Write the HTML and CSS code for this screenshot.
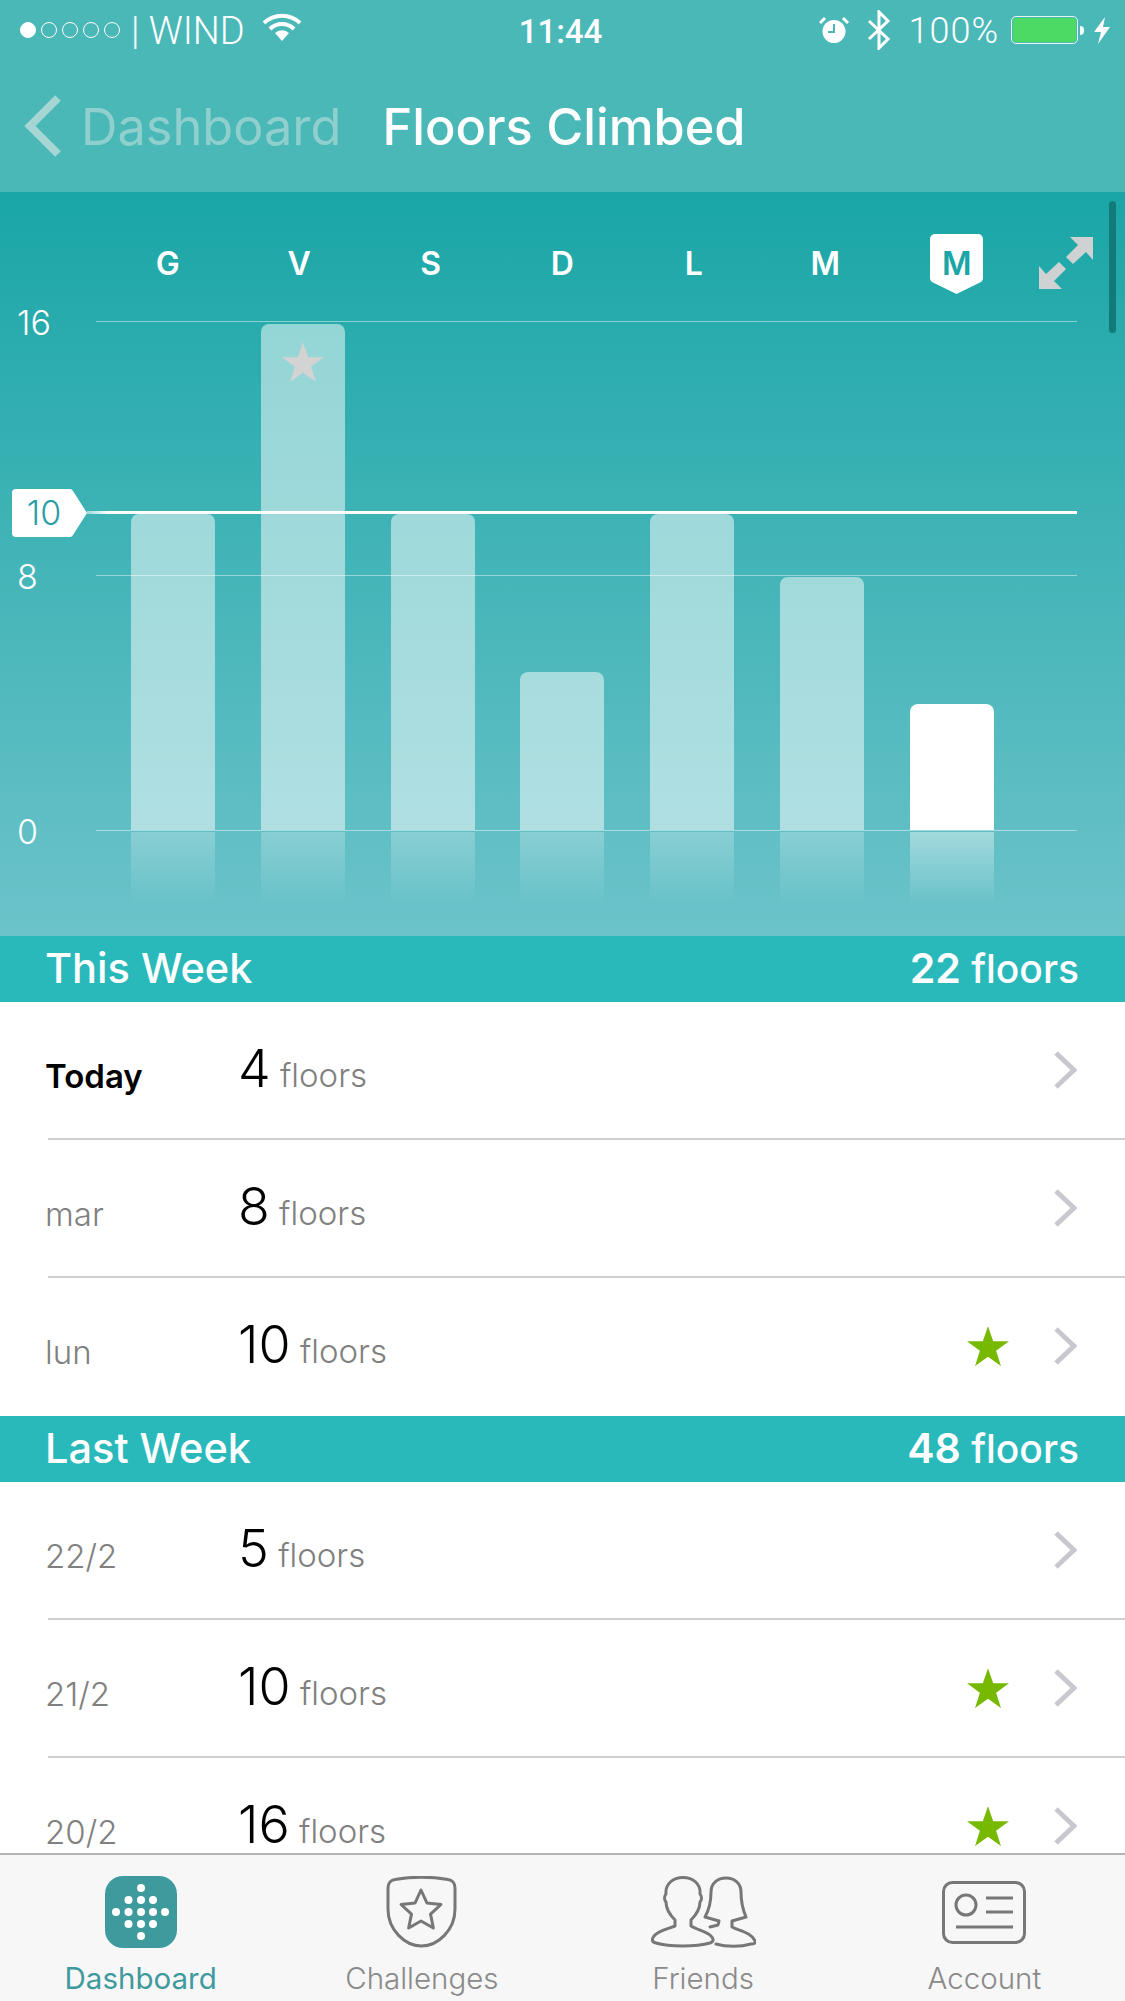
FILE: index.html
```html
<!doctype html>
<html lang="en">
<head>
    <meta charset="utf-8">
    <title>Floors Climbed</title>
    <link rel="stylesheet" href="styles.css">
</head>
<body>
<div class="app">
    <div class="top">
        <div class="status">
            <div class="status-left">
                <span class="dots"><i class="dot on"></i><i class="dot"></i><i class="dot"></i><i class="dot"></i><i class="dot"></i></span>
                <span class="carrier">| WIND</span>
                <svg class="wifi" width="40" height="28" viewBox="0 0 40 28"><path d="M2 10 A26 26 0 0 1 38 10" fill="none" stroke="#fff" stroke-width="4"/><path d="M8 16 A17 17 0 0 1 32 16" fill="none" stroke="#fff" stroke-width="4"/><path d="M13 20 A10 10 0 0 1 27 20 L20 28 Z" fill="#fff"/></svg>
            </div>
            <div class="time">11:44</div>
            <div class="status-right">
                <svg width="30" height="28" viewBox="0 0 30 28"><circle cx="15" cy="15.500" r="11.500" fill="#fff"/><path d="M15 8 V16 H9" fill="none" stroke="#4bb8b8" stroke-width="2"/><path d="M1 7 L6 2 M29 7 L24 2" stroke="#fff" stroke-width="3"/></svg>
                <svg class="bt" width="24" height="40" viewBox="0 0 24 40"><path d="M2 11 L21 29 L12 38 V2 L21 11 L2 29" fill="none" stroke="#fff" stroke-width="3"/></svg>
                <span class="pct">100%</span>
                <span class="battery"><span class="battery-fill"></span></span>
                <span class="battery-nub"></span>
                <svg class="bolt" width="16" height="27" viewBox="0 0 16 27"><polygon points="11,0 0,15 7,15 4,27 16,10 9,10" fill="#fff"/></svg>
            </div>
        </div>
        <div class="nav">
            <svg width="38" height="62" viewBox="0 0 38 62"><path d="M34 3 L6 31 L34 59" fill="none" stroke="#a5d6d4" stroke-width="8"/></svg>
            <span class="nav-back">Dashboard</span>
            <span class="nav-title">Floors Climbed</span>
        </div>
    </div>

    <div class="chart">
        <div class="scrollbar"></div>
        <div class="days">
            <div class="day">G</div>
            <div class="day">V</div>
            <div class="day">S</div>
            <div class="day">D</div>
            <div class="day">L</div>
            <div class="day">M</div>
            <div class="day current">
                <svg width="53" height="60" viewBox="0 0 53 60"><path d="M5 0 H48 A5 5 0 0 1 53 5 V44 A5 5 0 0 1 50 48.500 L26.500 60 L3 48.500 A5 5 0 0 1 0 44 V5 A5 5 0 0 1 5 0 Z" fill="#fff"/></svg>
                <span>M</span>
            </div>
            <svg class="expand" width="54" height="54" viewBox="0 0 54 54"><polygon points="31,1 54,1 54,24 47,16 34,28 27,21 39,9" fill="#cfd2d2"/><polygon points="23,53 0,53 0,30 7,38 20,26 27,33 15,45" fill="#cfd2d2"/></svg>
        </div>
        <div class="plot">
            <div class="grid-line" style="top:0"></div>
            <div class="grid-line" style="top:254px"></div>
            <div class="grid-line" style="top:509px"></div>
            <div class="axis" style="top:0">16</div>
            <div class="axis" style="top:254px">8</div>
            <div class="axis" style="top:509px">0</div>
            <div class="goal-line"></div>
            <div class="goal-tag">
                <svg width="75" height="48" viewBox="0 0 75 48"><path d="M4 0 H58 A4 4 0 0 1 61 2 L75 24 L61 46 A4 4 0 0 1 58 48 H4 A4 4 0 0 1 0 44 V4 A4 4 0 0 1 4 0 Z" fill="#fff"/></svg>
                <span>10</span>
            </div>
            <div class="bars">
                <div class="bar" style="height:316px"></div>
                <div class="bar" style="height:506px">
                    <svg class="bar-star" width="44" height="44" viewBox="0 0 100 100"><polygon points="50,3 61.800,37 97.600,37 68.500,58.500 79.400,93 50,72 20.600,93 31.500,58.500 2.400,37 38.200,37" fill="#d3d3d3"/></svg>
                </div>
                <div class="bar" style="height:316px"></div>
                <div class="bar" style="height:158px"></div>
                <div class="bar" style="height:316px"></div>
                <div class="bar" style="height:253px"></div>
                <div class="bar today" style="height:126px"></div>
            </div>
        </div>
        <div class="reflect">
            <div class="mirror"></div>
            <div class="mirror"></div>
            <div class="mirror"></div>
            <div class="mirror"></div>
            <div class="mirror"></div>
            <div class="mirror"></div>
            <div class="mirror today"></div>
        </div>
    </div>

    <div class="list">
        <div class="band"><span>This Week</span><span class="total"><b>22</b> floors</span></div>
        <div class="row">
            <span class="when today-label">Today</span>
            <span class="count"><b>4</b> floors</span>
            <svg class="chev" width="23" height="38" viewBox="0 0 23 38"><path d="M2 2 L20 19 L2 36" fill="none" stroke="#c8c8ce" stroke-width="5"/></svg>
        </div>
        <div class="row">
            <span class="when">mar</span>
            <span class="count"><b>8</b> floors</span>
            <svg class="chev" width="23" height="38" viewBox="0 0 23 38"><path d="M2 2 L20 19 L2 36" fill="none" stroke="#c8c8ce" stroke-width="5"/></svg>
        </div>
        <div class="row last">
            <span class="when">lun</span>
            <span class="count"><b>10</b> floors</span>
            <svg class="star" width="44" height="44" viewBox="0 0 100 100"><polygon points="50,3 61.800,37 97.600,37 68.500,58.500 79.400,93 50,72 20.600,93 31.500,58.500 2.400,37 38.200,37" fill="#76b900"/></svg>
            <svg class="chev" width="23" height="38" viewBox="0 0 23 38"><path d="M2 2 L20 19 L2 36" fill="none" stroke="#c8c8ce" stroke-width="5"/></svg>
        </div>
        <div class="band"><span>Last Week</span><span class="total"><b>48</b> floors</span></div>
        <div class="row">
            <span class="when">22/2</span>
            <span class="count"><b>5</b> floors</span>
            <svg class="chev" width="23" height="38" viewBox="0 0 23 38"><path d="M2 2 L20 19 L2 36" fill="none" stroke="#c8c8ce" stroke-width="5"/></svg>
        </div>
        <div class="row">
            <span class="when">21/2</span>
            <span class="count"><b>10</b> floors</span>
            <svg class="star" width="44" height="44" viewBox="0 0 100 100"><polygon points="50,3 61.800,37 97.600,37 68.500,58.500 79.400,93 50,72 20.600,93 31.500,58.500 2.400,37 38.200,37" fill="#76b900"/></svg>
            <svg class="chev" width="23" height="38" viewBox="0 0 23 38"><path d="M2 2 L20 19 L2 36" fill="none" stroke="#c8c8ce" stroke-width="5"/></svg>
        </div>
        <div class="row last">
            <span class="when">20/2</span>
            <span class="count"><b>16</b> floors</span>
            <svg class="star" width="44" height="44" viewBox="0 0 100 100"><polygon points="50,3 61.800,37 97.600,37 68.500,58.500 79.400,93 50,72 20.600,93 31.500,58.500 2.400,37 38.200,37" fill="#76b900"/></svg>
            <svg class="chev" width="23" height="38" viewBox="0 0 23 38"><path d="M2 2 L20 19 L2 36" fill="none" stroke="#c8c8ce" stroke-width="5"/></svg>
        </div>
    </div>

    <div class="tabs">
        <div class="tab active">
            <svg width="72" height="72" viewBox="0 0 72 72">
                <rect width="72" height="72" rx="18" fill="#3f9a9e"/>
                <g fill="#fff">
                    <circle cx="36" cy="12" r="4"/>
                    <circle cx="23.500" cy="24" r="4"/><circle cx="36" cy="24" r="4"/><circle cx="48" cy="24" r="4"/>
                    <circle cx="11" cy="36" r="4"/><circle cx="23.500" cy="36" r="4"/><circle cx="36" cy="36" r="4"/><circle cx="48" cy="36" r="4"/><circle cx="60" cy="36" r="4"/>
                    <circle cx="23.500" cy="48" r="4"/><circle cx="36" cy="48" r="4"/><circle cx="48" cy="48" r="4"/>
                    <circle cx="36" cy="60" r="4"/>
                </g>
            </svg>
            <span>Dashboard</span>
        </div>
        <div class="tab">
            <svg width="71" height="72" viewBox="0 0 71 72" fill="none" stroke="#777" stroke-width="3">
                <path d="M2 12 C2 7 5 4 9 3.500 C26 0.500 45 0.500 62 3.500 C66 4 69 7 69 12 L69 33 C69 54 52 70 35.500 70 C19 70 2 54 2 33 Z"/>
                <polygon stroke-linejoin="round" points="35,14 40.880,26.910 54.970,28.510 44.510,38.090 47.340,51.990 35,45 22.660,51.990 25.490,38.090 15.030,28.510 29.120,26.910"/>
            </svg>
            <span>Challenges</span>
        </div>
        <div class="tab">
            <svg width="105" height="72" viewBox="0 0 105 72" fill="none" stroke="#777" stroke-width="3" stroke-linejoin="round" stroke-linecap="round">
                <path d="M24 44 C19 39 15 32 15 26 C13 24 13 20 15 18 C14 8 22 1.500 32 1.500 C42 1.500 50 8 49 18 C51 20 51 24 49 26 C49 32 45 39 40 44 L40 50 C47 54 56 56 60 60 C62 62 64 65 59 67 C45 71 18 71 5 67 C0 66 1 63 3 60 C8 54 17 53 24 50 Z"/>
                <path d="M59 51 L67 49 L68 45 L54 41 C58 34 60 24 60 16 C60 7 67 2 75 2 C83 2 90 7 90 16 C90 26 92 34 95 41 L81 45 L81 51 C88 55 100 56 104 65 C105 67 103 68 100 68 C90 71 75 71 65 68"/>
            </svg>
            <span>Friends</span>
        </div>
        <div class="tab">
            <svg width="84" height="72" viewBox="0 -5 84 72" fill="none" stroke="#777" stroke-width="3">
                <rect x="1.500" y="1.500" width="81" height="60" rx="9"/>
                <circle cx="24" cy="24" r="10"/>
                <path d="M44 17 H71 M44 31 H71 M14 46 H71"/>
            </svg>
            <span>Account</span>
        </div>
    </div>
</div>
</body>
</html>
```

FILE: styles.css
```css
* { margin:0; padding:0; box-sizing:border-box; }
body
{
    width:1125px;
    height:2001px;
    overflow:hidden;
    font-family:"Inter", "Lato", sans-serif;
    background:#fff;
}
.app
{
    height:2001px;
    display:flex;
    flex-direction:column;
}

/* status bar + nav */
.top
{
    height:192px;
    flex:none;
    background:#4bb8b8;
    color:#fff;
}
.status
{
    height:60px;
    padding:0 15px 0 20px;
    display:flex;
    align-items:center;
    font-family:"Roboto", "Liberation Sans", sans-serif;
    font-weight:300;
    font-size:38px;
}
.status-left, .status-right
{
    flex:1;
    display:flex;
    align-items:center;
}
.status-right { justify-content:flex-end; }
.dots { display:flex; gap:5px; }
.dot
{
    width:16px;
    height:16px;
    border-radius:50%;
    border:1px solid #fff;
}
.dot.on { background:#fff; }
.carrier { margin:2px 0 0 11px; }
.wifi { margin-left:17px; margin-bottom:6px; }
.time { font-weight:500; font-size:33px; margin:2px 0 0 -9px; }
.bt { margin-left:18px; }
.pct { margin:2px 0 0 17px; letter-spacing:1px; font-size:36px; }
.battery
{
    margin-left:12px;
    width:67px;
    height:28px;
    border:1.5px solid #e4f5f2;
    border-radius:5px;
    padding:1px;
    display:block;
}
.battery-fill
{
    display:block;
    height:100%;
    background:#4cd964;
    border-radius:3px;
}
.battery-nub
{
    width:4px;
    height:9px;
    margin-left:2px;
    background:#fff;
    border-radius:0 4px 4px 0;
}
.bolt { margin-left:10px; }
.nav
{
    height:132px;
    padding:0 0 0 24px;
    display:flex;
    align-items:center;
    font-size:50.500px;
}
.nav-back { margin-left:19px; color:#8fcfcd; font-weight:400; }
.nav-title { margin-left:41px; font-weight:500; }

/* chart */
.chart
{
    height:744px;
    flex:none;
    position:relative;
    overflow:hidden;
    background:linear-gradient(#1aa6a6, #6cc3ca);
}
.scrollbar
{
    position:absolute;
    left:1109px;
    top:9px;
    width:7px;
    height:132px;
    border-radius:4px;
    background:#137a7a;
}
.days
{
    height:142px;
    padding-left:102px;
    display:flex;
    align-items:center;
}
.day
{
    width:131.500px;
    text-align:center;
    color:#fff;
    font-weight:600;
    font-size:32px;
    position:relative;
}
.day.current { color:#1aa6a6; }
.day svg
{
    position:absolute;
    left:39px;
    top:-10px;
}
.day span { position:relative; }
.expand { margin-left:16px; }
.plot
{
    height:509px;
    margin-top:-13px;
    position:relative;
}
.grid-line
{
    position:absolute;
    left:96px;
    width:981px;
    height:1px;
    background:rgba(255,255,255,.45);
}
.axis
{
    position:absolute;
    left:17px;
    color:#fff;
    font-size:34px;
    font-weight:300;
    line-height:34px;
    margin-top:-15px;
}
.goal-line
{
    position:absolute;
    left:87px;
    top:190px;
    width:990px;
    height:3px;
    background:linear-gradient(90deg, rgba(255,255,255,.5), #fff 21px);
    z-index:2;
}
.goal-tag
{
    position:absolute;
    left:12px;
    top:168px;
    width:75px;
    height:48px;
    z-index:2;
}
.goal-tag svg { display:block; }
.goal-tag span
{
    position:absolute;
    left:14px;
    top:0;
    width:36px;
    text-align:center;
    line-height:48px;
    font-size:34px;
    font-weight:300;
    color:#2a9fa8;
}
.bars
{
    height:100%;
    padding-left:131px;
    display:flex;
    align-items:flex-end;
    gap:45.800px;
}
.bar
{
    width:84px;
    border-radius:8px 8px 0 0;
    background:rgba(255,255,255,.5);
    display:flex;
    justify-content:center;
}
.bar.today { background:#fff; }
.bar-star { margin-top:17px; }
.reflect
{
    padding:2px 0 0 131px;
    display:flex;
    gap:45.800px;
}
.mirror
{
    width:84px;
    height:72px;
    background:linear-gradient(rgba(255,255,255,.25), rgba(255,255,255,0));
}
.mirror.today { background:linear-gradient(rgba(255,255,255,.42), rgba(255,255,255,0)); }

/* list */
.list
{
    flex:1;
    overflow:hidden;
}
.band
{
    height:66px;
    padding:0 46px 2px 45px;
    display:flex;
    justify-content:space-between;
    align-items:center;
    background:#2ab9bb;
    color:#fff;
    font-weight:500;
    font-size:41.500px;
}
.total { font-size:39px; }
.total b { font-size:41px; font-weight:600; }
.row
{
    height:138px;
    padding:0 48px 0 45px;
    position:relative;
    display:flex;
    align-items:center;
}
.row::after
{
    content:"";
    position:absolute;
    left:48px;
    right:0;
    bottom:0;
    height:2px;
    background:#cfcfcf;
}
.row.last::after { display:none; }
.when
{
    width:193px;
    padding-top:10px;
    font-size:33px;
    font-weight:300;
    color:#808080;
}
.today-label { font-weight:600; color:#000; }
.count
{
    flex:1;
    margin-bottom:6px;
    font-size:33px;
    font-weight:300;
    color:#808080;
}
.count b
{
    font-size:52px;
    font-weight:300;
    color:#000;
}
.star { margin-right:44px; }
.chev { flex:none; margin-bottom:3px; }

/* tab bar */
.tabs
{
    height:148px;
    flex:none;
    display:flex;
    background:#f7f7f7;
    border-top:2px solid #b4b4b4;
}
.tab
{
    flex:1;
    padding-top:21px;
    display:flex;
    flex-direction:column;
    align-items:center;
    color:#8a8a8a;
    font-size:29.500px;
    font-weight:300;
}
.tab svg { display:block; flex:none; }
.tab span { margin-top:11px; line-height:38px; }
.tab.active { color:#3f9a9e; font-weight:400; }
```
